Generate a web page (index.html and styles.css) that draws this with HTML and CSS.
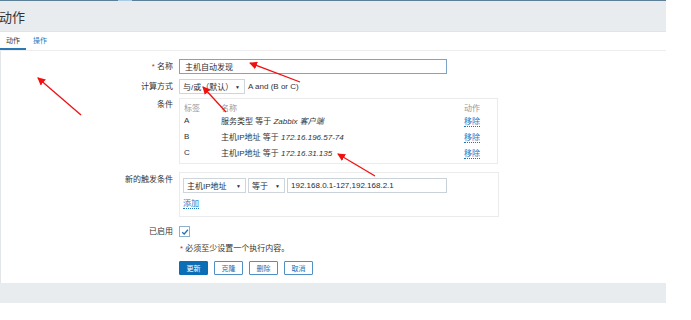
FILE: index.html
```html
<!DOCTYPE html>
<html lang="zh-CN">
<head>
  <meta charset="UTF-8" />
  <title>动作</title>
  <link rel="stylesheet" href="styles.css">
</head>
<body>
  <div class="page">
    <div class="topline"><span class="topline-mark"></span></div>
    <div class="header">
      <h1>动作</h1>
    </div>

    <div class="tabs">
      <a class="tab active">动作</a>
      <a class="tab">操作</a>
    </div>

    <div class="panel">
      <form class="form">
        <div class="row row-name">
          <label class="label"><span class="req">*</span> 名称</label>
          <div class="field">
            <input class="text-input name-input" type="text" value="主机自动发现" />
          </div>
        </div>

        <div class="row row-calc">
          <label class="label">计算方式</label>
          <div class="field inline">
            <div class="select calc-select">与/或（默认）<span class="caret">▼</span></div>
            <span class="formula">A and (B or C)</span>
          </div>
        </div>

        <div class="row row-cond">
          <label class="label">条件</label>
          <div class="field">
            <div class="box cond-box">
              <div class="cond-row cond-head">
                <span class="c-tag">标签</span>
                <span class="c-name">名称</span>
                <span class="c-act">动作</span>
              </div>
              <div class="cond-row">
                <span class="c-tag">A</span>
                <span class="c-name">服务类型 等于 <em>Zabbix 客户端</em></span>
                <span class="c-act"><a class="link">移除</a></span>
              </div>
              <div class="cond-row">
                <span class="c-tag">B</span>
                <span class="c-name">主机IP地址 等于 <em>172.16.196.57-74</em></span>
                <span class="c-act"><a class="link">移除</a></span>
              </div>
              <div class="cond-row">
                <span class="c-tag">C</span>
                <span class="c-name">主机IP地址 等于 <em>172.16.31.135</em></span>
                <span class="c-act"><a class="link">移除</a></span>
              </div>
            </div>
          </div>
        </div>

        <div class="row row-new">
          <label class="label">新的触发条件</label>
          <div class="field">
            <div class="box new-box">
              <div class="inline">
                <div class="select type-select">主机IP地址<span class="caret">▼</span></div>
                <div class="select op-select">等于<span class="caret">▼</span></div>
                <input class="text-input ip-input" type="text" value="192.168.0.1-127,192.168.2.1" />
              </div>
              <a class="link add-link">添加</a>
            </div>
          </div>
        </div>

        <div class="row row-enabled">
          <label class="label">已启用</label>
          <div class="field">
            <span class="checkbox">
              <svg width="8" height="8" viewBox="0 0 8 8"><path d="M1.2 4.2 L3.2 6 L6.9 1.8" fill="none" stroke="#1f74b8" stroke-width="1.3"/></svg>
            </span>
          </div>
        </div>

        <div class="row row-note">
          <span></span>
          <div class="field note"><span class="req">*</span> 必须至少设置一个执行内容。</div>
        </div>

        <div class="row row-buttons">
          <span></span>
          <div class="field buttons">
            <button class="btn primary" type="button">更新</button>
            <button class="btn" type="button">克隆</button>
            <button class="btn" type="button">删除</button>
            <button class="btn" type="button">取消</button>
          </div>
        </div>
      </form>
    </div>

    <div class="footer"></div>
  </div>

  <!-- annotation arrows drawn over the screenshot -->
  <svg class="arrows" width="691" height="320" viewBox="0 0 691 320">
    <defs>
      <marker id="head" markerWidth="8" markerHeight="8" refX="7" refY="4" orient="auto" markerUnits="userSpaceOnUse">
        <path d="M0 0 L8 4 L0 8 Z" fill="#f01010"/>
      </marker>
    </defs>
    <line x1="81" y1="115" x2="38" y2="78" stroke="#f01010" stroke-width="1.3" marker-end="url(#head)"/>
    <line x1="300" y1="82" x2="250" y2="63" stroke="#f01010" stroke-width="1.3" marker-end="url(#head)"/>
    <line x1="226" y1="112" x2="203" y2="87" stroke="#f01010" stroke-width="1.3" marker-end="url(#head)"/>
    <line x1="375" y1="176" x2="338" y2="154" stroke="#f01010" stroke-width="1.3" marker-end="url(#head)"/>
  </svg>
</body>
</html>
```

FILE: styles.css
```css
body {
  margin: 0;
  background: #ffffff;
  font-family: "Liberation Sans", "Noto Sans CJK SC", sans-serif;
  font-size: 8px;
  color: #2b343a;
}
.page {
  width: 666px;
}
.topline {
  height: 1px;
  background: #5d7f97;
  position: relative;
}
.topline-mark {
  position: absolute;
  left: 118px;
  width: 14px;
  height: 1px;
  background: #a8cbe6;
}
.header {
  height: 30px;
  background: #e9ecee;
  border-bottom: 1px solid #dfe4e7;
  display: flex;
  align-items: center;
}
.header h1 {
  margin: 0 0 0 -1px;
  font-size: 13px;
  font-weight: normal;
  color: #333;
}
.tabs {
  height: 18px;
  display: flex;
  align-items: stretch;
  background: #fff;
  border-bottom: 1px solid #eeeeee;
}
.tab {
  padding: 0 6px;
  margin-right: 1px;
  display: flex;
  align-items: center;
  font-size: 7px;
  color: #1f78bf;
  border-bottom: 2px solid transparent;
}
.tab.active {
  color: #333;
  border-bottom-color: #2a79b3;
}
.panel {
  height: 232px;
  border-left: 1px solid #e3e6e8;
  background: #fff;
}
.form {
  padding-top: 8px;
}
.row {
  display: grid;
  grid-template-columns: 172px 1fr;
  column-gap: 6px;
  align-items: start;
  height: auto;
}
.label {
  text-align: right;
  color: #333;
  line-height: 15px;
  height: 15px;
}
.req {
  color: #d22;
}
.row-name { margin-bottom: 5px; height: 15px; }
.row-calc { margin-bottom: 4px; height: 15px; }
.row-cond { margin-bottom: 8px; height: 66px; }
.row-new { margin-bottom: 9px; height: 45px; }
.row-enabled { margin-bottom: 7px; height: 11px; }
.row-note { margin-bottom: 8px; height: 9px; }
.row-cond .label { line-height: 14px; }
.row-new .label { line-height: 16px; }
.row-enabled .label { line-height: 11px; height: 11px; }

.field {
  min-width: 0;
}
.text-input {
  display: block;
  box-sizing: border-box;
  height: 15px;
  border: 1px solid #c9d2d8;
  padding: 0 4px;
  font-family: inherit;
  font-size: 8px;
  color: #1f2c33;
  outline: none;
  margin: 0;
}
.name-input {
  width: 268px;
  border-color: #7ca4c6;
  padding-left: 5px;
}
.inline {
  display: flex;
  align-items: center;
  height: 15px;
}
.select {
  box-sizing: border-box;
  height: 15px;
  border: 1px solid #cfd6db;
  display: flex;
  align-items: center;
  justify-content: space-between;
  padding: 0 4px 0 3px;
  background: #fff;
  color: #1f2c33;
}
.caret {
  font-size: 5px;
}
.calc-select {
  width: 66px;
}
.formula {
  margin-left: 3px;
}
.box {
  box-sizing: border-box;
  border: 1px solid #ebebeb;
}
.cond-box {
  width: 319px;
  height: 66px;
  padding: 3px 0 0 4px;
}
.cond-row {
  display: grid;
  grid-template-columns: 37px 243px 1fr;
  height: 16px;
  align-items: center;
}
.cond-head {
  height: 10px;
  color: #999;
}
.cond-row em {
  font-style: italic;
}
.link {
  color: #1f78bf;
  border-bottom: 1px dotted #1f78bf;
}
.new-box {
  width: 320px;
  height: 45px;
  padding: 5px 0 0 3px;
}
.type-select {
  width: 63px;
  margin-right: 2px;
}
.op-select {
  width: 37px;
  margin-right: 2px;
}
.ip-input {
  width: 160px;
  padding-left: 3px;
}
.add-link {
  display: inline-block;
  margin-top: 6px;
  line-height: 9px;
}
.checkbox {
  box-sizing: border-box;
  width: 11px;
  height: 11px;
  border: 1px solid #8fb0cc;
  display: flex;
  align-items: center;
  justify-content: center;
}
.note {
  padding-left: 1px;
  color: #333;
  line-height: 9px;
}
.buttons {
  display: flex;
  gap: 6px;
}
.btn {
  box-sizing: border-box;
  width: 29px;
  height: 14px;
  padding: 0;
  border: 1px solid #4f8fc6;
  background: #fff;
  color: #1f6fb0;
  font-family: inherit;
  font-size: 7px;
  border-radius: 1px;
}
.btn.primary {
  background: #0c6fb6;
  border-color: #0c6fb6;
  color: #fff;
}
.footer {
  height: 20px;
  background: #e9ecef;
}
.arrows {
  position: absolute;
  left: 0;
  top: 0;
  pointer-events: none;
}
```
